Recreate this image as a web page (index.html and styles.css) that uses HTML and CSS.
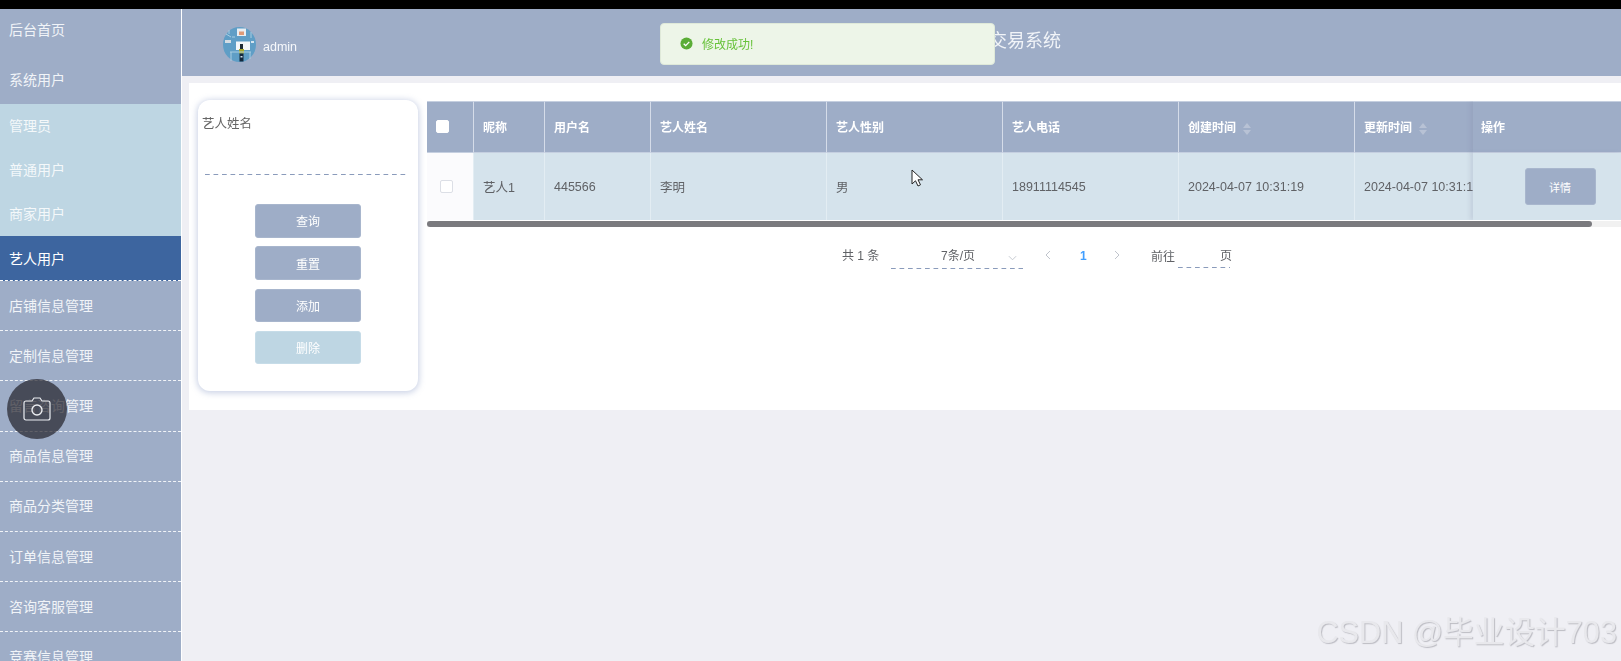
FILE: index.html
```html
<!DOCTYPE html>
<html lang="zh-CN">
<head>
<meta charset="utf-8">
<title>艺人用户</title>
<link rel="stylesheet" href="styles.css">
</head>
<body>
<div class="topbar"></div>
<div class="app">
  <aside class="sidebar">
    <a class="nav first">后台首页</a>
    <a class="nav second">系统用户</a>
    <div class="submenu">
      <a class="sub">管理员</a>
      <a class="sub">普通用户</a>
      <a class="sub">商家用户</a>
    </div>
    <a class="sub active">艺人用户</a>
    <a class="nav dashed">店铺信息管理</a>
    <a class="nav dashed">定制信息管理</a>
    <a class="nav dashed">留言咨询管理</a>
    <a class="nav dashed">商品信息管理</a>
    <a class="nav dashed">商品分类管理</a>
    <a class="nav dashed">订单信息管理</a>
    <a class="nav dashed">咨询客服管理</a>
    <a class="nav dashed">竞赛信息管理</a>
  </aside>
  <main class="main">
    <header class="header">
      <svg class="avatar" viewBox="0 0 33 35" aria-hidden="true">
        <ellipse cx="16.500" cy="17.500" rx="16.500" ry="17.500" fill="#5f9ec6"/>
        <rect x="14" y="1.500" width="9" height="7.500" fill="#e8eef3"/>
        <rect x="16" y="4.500" width="5" height="3.500" fill="#dd9a78"/>
        <rect x="13" y="14.500" width="14" height="8.500" fill="#f5f7f9"/>
        <rect x="17" y="17" width="3" height="5" fill="#1f2a35"/>
        <rect x="16" y="22" width="5" height="4.500" fill="#a6a82c"/>
        <rect x="16.500" y="26.500" width="4" height="8" fill="#13283c"/>
        <rect x="17.500" y="29" width="2" height="1.500" fill="#cfe0ea"/>
        <rect x="2" y="13" width="6" height="3" fill="#d5dde3"/>
        <rect x="28" y="14" width="3" height="2" fill="#d5e5ef"/>
        <path d="M7 25h21M8 25v9M27 25v7M3 7l5 3M9 10h3M28 5v6M6 3v4" stroke="#a9cde2" stroke-width="1" fill="none"/>
      </svg>
      <span class="username">admin</span>
      <h1 class="title">艺人定制交易系统</h1>
    </header>
    <section class="panel">
      <form class="filter">
        <label class="filter-label">艺人姓名</label>
        <div class="filter-input"></div>
        <div class="filter-actions">
          <button type="button" class="btn">查询</button>
          <button type="button" class="btn">重置</button>
          <button type="button" class="btn">添加</button>
          <button type="button" class="btn disabled">删除</button>
        </div>
      </form>
      <div class="content">
        <div class="table-wrap">
          <table class="table">
            <colgroup>
              <col class="c-check"><col class="c-nick"><col class="c-user">
              <col class="c-wide"><col class="c-wide"><col class="c-wide"><col class="c-wide"><col class="c-wide">
              <col class="c-op">
            </colgroup>
            <thead>
              <tr>
                <th class="check-head"><span class="box head-box"></span></th>
                <th>昵称</th>
                <th>用户名</th>
                <th>艺人姓名</th>
                <th>艺人性别</th>
                <th>艺人电话</th>
                <th>创建时间<span class="sort"><i class="up"></i><i class="down"></i></span></th>
                <th>更新时间<span class="sort"><i class="up"></i><i class="down"></i></span></th>
                <th class="op">操作</th>
              </tr>
            </thead>
            <tbody>
              <tr>
                <td class="check-cell"><span class="box"></span></td>
                <td>艺人1</td>
                <td>445566</td>
                <td>李明</td>
                <td>男</td>
                <td>18911114545</td>
                <td>2024-04-07 10:31:19</td>
                <td>2024-04-07 10:31:19</td>
                <td class="op"><button type="button" class="btn detail">详情</button></td>
              </tr>
            </tbody>
          </table>
        </div>
        <div class="scrollbar"><div class="thumb"></div></div>
        <nav class="pager">
          <span class="total">共 1 条</span>
          <span class="size">7条/页
            <svg class="chev down-chev" viewBox="0 0 10 6" aria-hidden="true"><path d="M1 1l4 4 4-4"/></svg>
          </span>
          <svg class="chev side prev" viewBox="0 0 6 10" aria-hidden="true"><path d="M5 1L1 5l4 4"/></svg>
          <span class="current">1</span>
          <svg class="chev side next" viewBox="0 0 6 10" aria-hidden="true"><path d="M1 1l4 4-4 4"/></svg>
          <span class="goto">前往</span>
          <span class="goto-input">页</span>
        </nav>
      </div>
    </section>
  </main>
</div>

<div class="toast">
  <svg class="toast-icon" viewBox="0 0 14 14" aria-hidden="true">
    <circle cx="7" cy="7" r="6.500" fill="#5aad36"/>
    <path d="M4 7.200l2.100 2.100L10 5.200" fill="none" stroke="#fff" stroke-width="1.400"/>
  </svg>
  <span>修改成功!</span>
</div>

<div class="camera">
  <svg viewBox="0 0 28 24" aria-hidden="true">
    <path d="M3 4h6l2-3h6l2 3h6a2 2 0 0 1 2 2v15a2 2 0 0 1-2 2H3a2 2 0 0 1-2-2V6a2 2 0 0 1 2-2z" fill="none" stroke="#eceef2" stroke-width="1.200"/>
    <circle cx="14" cy="13" r="5" fill="none" stroke="#eceef2" stroke-width="1.400"/>
  </svg>
</div>

<svg class="cursor" viewBox="0 0 12 18" aria-hidden="true">
  <path d="M1 1v14l3.500-3.200L7 17l2.500-1.200-2.500-5h4.500z" fill="#fff" stroke="#222" stroke-width="1"/>
</svg>

<div class="watermark">CSDN @毕业设计703</div>
</body>
</html>
```
FILE: styles.css
```css
* { box-sizing: border-box; }

html, body {
  margin: 0;
  height: 661px;
  overflow: hidden;
}

body {
  background: #efeff4;
  font-family: "Liberation Sans", "Noto Sans CJK SC", sans-serif;
  font-size: 12px;
  color: #666;
  position: relative;
  filter: blur(0.35px);
}

.topbar {
  height: 9px;
  background: #000;
}

.app {
  display: flex;
  height: 652px;
}

/* sidebar */
.sidebar {
  width: 182px;
  flex: none;
  background: #9eadc7;
  border-right: 1px solid #fff;
  overflow: hidden;
  color: #fff;
  font-size: 14px;
}

.nav, .sub {
  display: flex;
  align-items: center;
  padding-left: 9px;
  padding-bottom: 2px;
  color: #f1f4f8;
}

.nav.first {
  height: 46px;
  padding-bottom: 7px;
}

.nav.second {
  height: 49px;
}

.submenu {
  background: #bed6e3;
}

.sub {
  height: 44px;
  color: rgba(255, 255, 255, 0.85);
}

.sub.active {
  height: 45px;
  padding-bottom: 1px;
  background: #3d659f;
  color: #fff;
  border-bottom: 1px dashed #fff;
}

.nav.dashed {
  height: 50.2px;
  border-bottom: 1px dashed #f1f4f8;
  flex: none;
}

/* header */
.main {
  flex: 1;
  min-width: 0;
}

.header {
  height: 67px;
  background: #9eadc7;
  display: flex;
  align-items: flex-start;
  padding-left: 41px;
  color: #fff;
}

.avatar {
  width: 33px;
  height: 35px;
  margin-top: 18px;
  flex: none;
}

.username {
  margin: 31px 0 0 7px;
  line-height: 14px;
  color: #f6f8fb;
  font-size: 12.500px;
}

.title {
  margin: 21px 0 0 620px;
  font-size: 18px;
  font-weight: 400;
  line-height: 22px;
  white-space: nowrap;
  color: #f1f4f8;
}

/* panel */
.panel {
  margin: 7px 0 0 7px;
  height: 327px;
  background: #fff;
  display: flex;
  padding: 17px 0 0 9px;
}

.filter {
  width: 220px;
  height: 291px;
  flex: none;
  background: #fff;
  border-radius: 12px;
  box-shadow: 0 1px 6px 1px rgba(120, 140, 190, 0.4);
  padding: 15px 4px 0;
}

.filter-label {
  display: block;
  line-height: 18px;
  color: #666;
  font-size: 12.500px;
}

.filter-input {
  margin: 0 8px 0 3px;
  height: 42px;
  background: linear-gradient(to right, #8a9bbb 55%, transparent 0) left bottom / 8.500px 1.500px repeat-x;
}

.filter-actions {
  margin-top: 29px;
  display: flex;
  flex-direction: column;
  align-items: center;
  gap: 8.800px;
}

.btn {
  width: 106px;
  height: 33.500px;
  border: 1px solid #a8b6cd;
  border-radius: 3px;
  background: #9eadc7;
  color: #fff;
  font: inherit;
  font-size: 12px;
  padding: 0;
}

.btn.disabled {
  background: #bed6e3;
  border-color: #c6dce8;
}

/* table */
.content {
  flex: 1;
  min-width: 0;
  margin: 1px 0 0 9px;
}

.table-wrap {
  overflow: hidden;
}

.table {
  width: 1252px;
  table-layout: fixed;
  border-collapse: separate;
  border-spacing: 0;
}

.c-check { width: 47px; }
.c-nick { width: 71px; }
.c-user { width: 106px; }
.c-wide { width: 176px; }
.c-op { width: 148px; }

.table th {
  height: 52px;
  background: #9eadc7;
  color: #fff;
  font-weight: 700;
  font-size: 12px;
  text-align: left;
  padding: 0 0 1px 9px;
  border-top: 1px solid #c5cfe0;
  border-bottom: 1px solid #c5cfe0;
  border-right: 1px solid #d5dce9;
  white-space: nowrap;
}

.table td {
  height: 67px;
  background: #d5e3ec;
  font-size: 12.500px;
  color: #606266;
  padding: 0 0 0 9px;
  border-right: 1px solid #e3edf3;
  white-space: nowrap;
  overflow: hidden;
}

.table td.check-cell {
  background: #fbfbfd;
  padding-left: 13px;
}

.table th.check-head {
  padding-left: 9px;
}

.box {
  display: block;
  width: 13px;
  height: 13px;
  background: #fff;
  border: 1px solid #dcdfe6;
  border-radius: 2px;
}

.head-box {
  border-color: #fff;
}

.table .op {
  position: sticky;
  right: 0;
  border-right: 0;
  box-shadow: -3px 0 4px rgba(120, 130, 160, 0.18);
}

.table th.op {
  padding-left: 8px;
}

.table td.op {
  text-align: center;
  padding: 0 0 0 26px;
}

.btn.detail {
  width: 71px;
  height: 37px;
  font-size: 11px;
}

.sort {
  display: inline-flex;
  flex-direction: column;
  gap: 2px;
  margin-left: 7px;
  vertical-align: middle;
}

.sort i {
  display: block;
  width: 0;
  height: 0;
  border-left: 4.500px solid transparent;
  border-right: 4.500px solid transparent;
}

.sort .up { border-bottom: 5px solid #b8c2d5; }
.sort .down { border-top: 5px solid #b8c2d5; }

.scrollbar {
  margin-top: 1px;
  height: 6px;
  background: #f1f1f1;
}

.thumb {
  width: 1165px;
  height: 6px;
  background: #7a7a7e;
  border-radius: 3px;
}

/* pagination */
.pager {
  display: flex;
  align-items: center;
  height: 28px;
  margin-top: 14px;
  padding-left: 415px;
  font-size: 12px;
  color: #606266;
}

.total {
  width: 49px;
  flex: none;
  white-space: nowrap;
  padding-bottom: 2px;
}

.size {
  width: 132px;
  height: 28px;
  flex: none;
  padding-left: 50px;
  line-height: 30px;
  position: relative;
  background: linear-gradient(to right, #8a9bbb 55%, transparent 0) left bottom / 8.500px 1.500px repeat-x;
}

.chev {
  fill: none;
  stroke: #c0c4cc;
  stroke-width: 1;
}

.down-chev {
  position: absolute;
  right: 6px;
  top: 14px;
  width: 9px;
  height: 6px;
}

.side {
  width: 6px;
  height: 10px;
  flex: none;
}

.prev { margin-left: 22px; }

.current {
  margin-left: 29px;
  width: 10px;
  padding-top: 2px;
  color: #409eff;
  font-weight: 700;
}

.next { margin-left: 24px; }

.goto {
  margin-left: 31px;
  width: 27px;
  flex: none;
}

.goto-input {
  width: 52px;
  height: 27px;
  flex: none;
  margin-top: -1px;
  padding-left: 42px;
  white-space: nowrap;
  line-height: 30px;
  background: linear-gradient(to right, #8a9bbb 55%, transparent 0) left bottom / 8.500px 1.500px repeat-x;
}

/* overlays */
.toast {
  position: absolute;
  left: 660px;
  top: 23px;
  width: 335px;
  height: 42px;
  background: #edf5e8;
  border: 1px solid #dfe9d9;
  border-radius: 4px;
  display: flex;
  align-items: center;
  gap: 9px;
  padding-left: 19px;
  padding-bottom: 1px;
  color: #67c23a;
  font-size: 12px;
}

.toast-icon {
  width: 13px;
  height: 13px;
  flex: none;
}

.camera {
  position: absolute;
  left: 7px;
  top: 379px;
  width: 60px;
  height: 60px;
  border-radius: 50%;
  background: rgba(34, 33, 41, 0.7);
  display: flex;
  align-items: center;
  justify-content: center;
}

.camera svg {
  width: 28px;
  height: 24px;
}

.cursor {
  position: absolute;
  left: 911px;
  top: 169px;
  width: 12px;
  height: 18px;
}

.watermark {
  position: absolute;
  right: 4px;
  top: 616px;
  font-size: 30.700px;
  line-height: 34px;
  color: #e8e8ec;
  text-shadow: 1px 1px 1px #bcbcc3;
  white-space: nowrap;
}
```
